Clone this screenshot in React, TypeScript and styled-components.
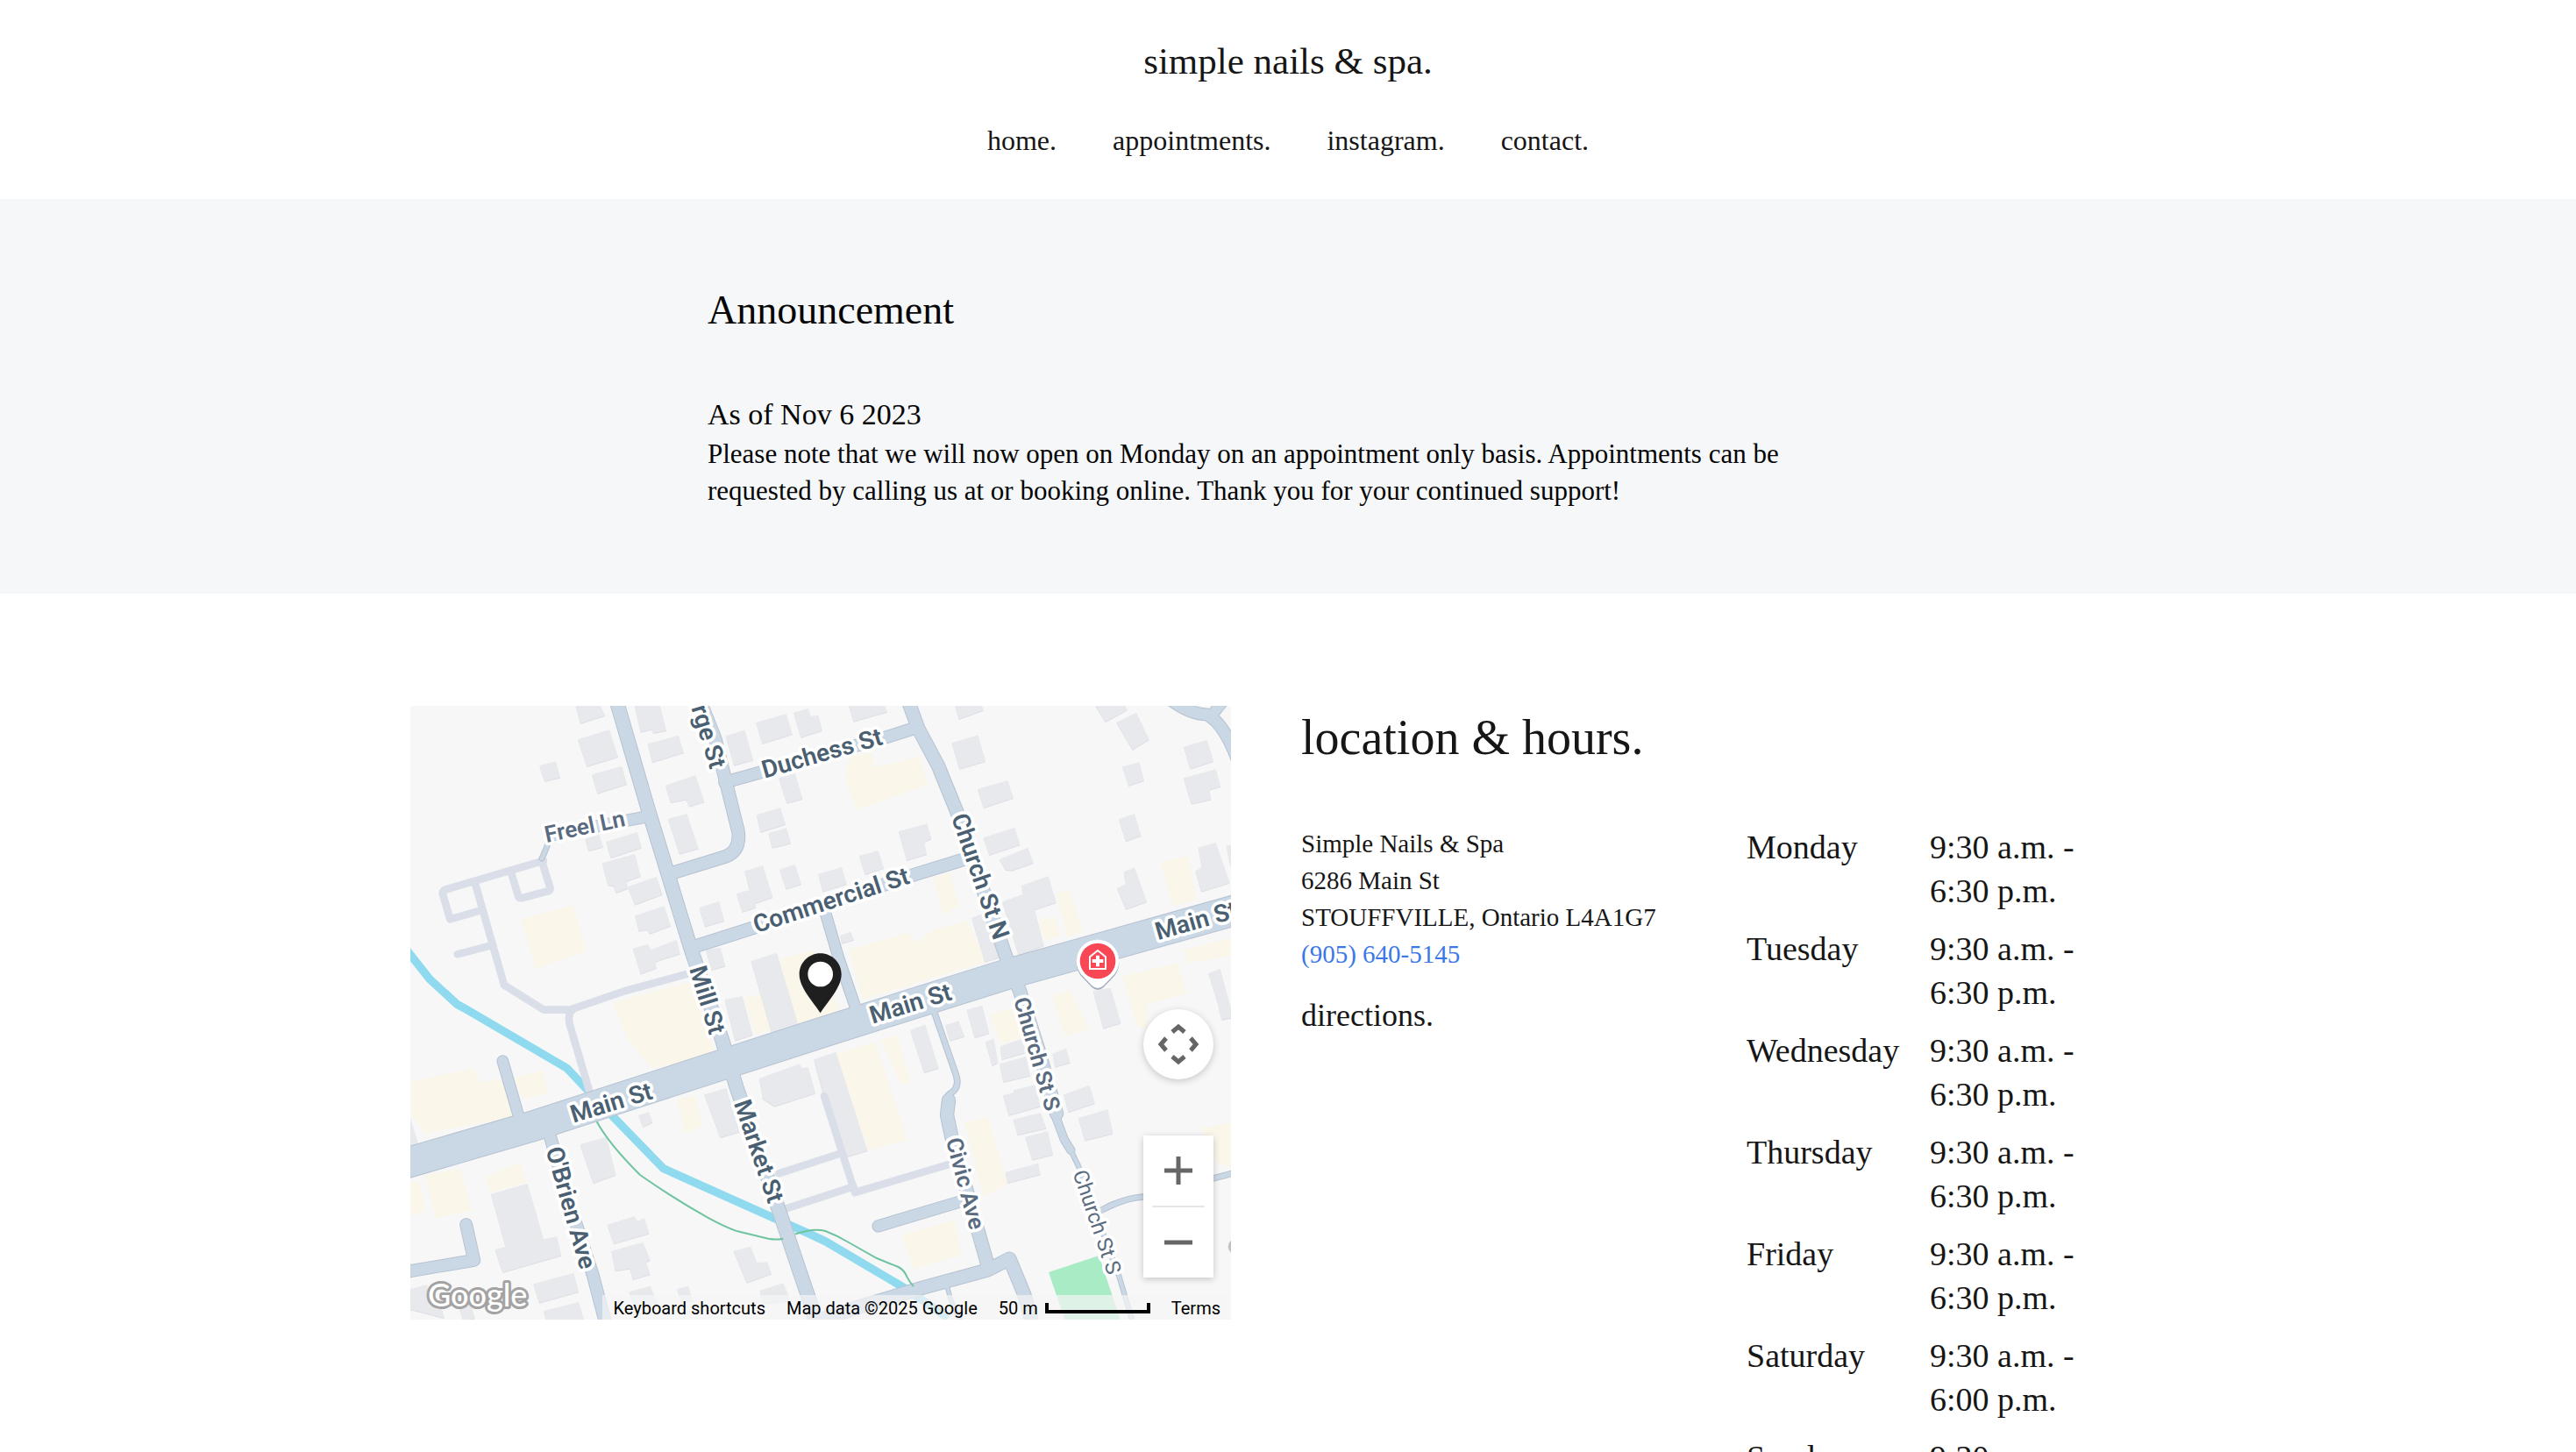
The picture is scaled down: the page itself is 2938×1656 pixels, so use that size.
import React from "react";
import styled, { createGlobalStyle } from "styled-components";

const GlobalStyle = createGlobalStyle`
  *, *::before, *::after { box-sizing: border-box; }
  body {
    margin: 0;
    background: #ffffff;
    color: #161616;
    font-family: "Liberation Serif", serif;
  }
`;

const Header = styled.header`
  display: flex;
  flex-direction: column;
  align-items: center;
  gap: 45px;
  padding: 45px 0 47px;
`;

const Brand = styled.a`
  font-size: 43px;
  line-height: 50px;
  color: inherit;
  text-decoration: none;
`;

const Nav = styled.nav`
  display: flex;
  gap: 64px;
`;

const NavLink = styled.a`
  font-size: 32px;
  line-height: 40px;
  color: inherit;
  text-decoration: none;
`;

const Banner = styled.section`
  background: #f5f7f9;
  color: #050505;
  padding: 99px 32px 96px;
`;

const BannerBody = styled.div`
  max-width: 1324px;
  margin: 0 auto;
`;

const BannerTitle = styled.h2`
  margin: 0 0 67px;
  font-size: 46px;
  line-height: 56px;
  font-weight: 400;
`;

const BannerDate = styled.h3`
  margin: 0;
  font-size: 34px;
  line-height: 48px;
  font-weight: 400;
`;

const BannerText = styled.p`
  margin: 0;
  font-size: 31px;
  line-height: 42px;
`;

const Visit = styled.main`
  display: grid;
  grid-template-columns: 936fr 986fr;
  column-gap: 80px;
  align-items: start;
  max-width: 2002px;
  margin: 0 auto;
  padding: 128px 0;
`;

const Details = styled.div`
  display: grid;
  grid-template-columns: 508fr 478fr;
  align-items: start;
`;

const VisitTitle = styled.h1`
  grid-column: 1 / -1;
  margin: 0 0 64px;
  font-size: 56px;
  line-height: 72px;
  font-weight: 400;
`;

const Address = styled.address`
  font-style: normal;
  font-size: 29px;
  line-height: 42px;
`;

const PhoneLink = styled.a`
  color: #3b78e7;
  text-decoration: none;
`;

const Directions = styled.a`
  display: inline-block;
  margin-top: 28px;
  font-size: 36px;
  line-height: 42px;
  color: inherit;
  text-decoration: none;
`;

const Hours = styled.table`
  border-collapse: collapse;
  font-size: 38px;
  line-height: 50px;
`;

const Day = styled.th`
  width: 209px;
  padding: 0 0 16px;
  font-weight: 400;
  text-align: left;
  vertical-align: top;
`;

const Time = styled.td`
  padding: 0 0 16px;
  white-space: nowrap;
`;

const MapFrame = styled.div`
  position: relative;
  aspect-ratio: 936 / 700;
  overflow: hidden;
  background: #f7f7f7;
`;

const MapDrawing = styled.svg`
  display: block;
  width: 100%;
  height: 100%;
  font-family: Roboto, sans-serif;
`;

const MapControls = styled.div`
  position: absolute;
  right: 20px;
  bottom: 48px;
  display: flex;
  flex-direction: column;
  gap: 64px;
`;

const PanButton = styled.button`
  display: grid;
  place-items: center;
  width: 80px;
  height: 80px;
  padding: 0;
  border: 0;
  border-radius: 50%;
  background: #ffffff;
  box-shadow: 0 2px 8px rgba(0, 0, 0, 0.2);
`;

const ZoomBox = styled.div`
  display: flex;
  flex-direction: column;
  width: 80px;
  background: #ffffff;
  box-shadow: 0 2px 8px rgba(0, 0, 0, 0.2);
`;

const ZoomButton = styled.button`
  display: grid;
  place-items: center;
  height: 80px;
  padding: 0;
  border: 0;
  background: transparent;
`;

const ZoomRule = styled.hr`
  width: 60px;
  height: 2px;
  margin: 0 auto;
  border: 0;
  background: #e6e6e6;
`;

const Attribution = styled.div`
  position: absolute;
  right: 0;
  bottom: 0;
  display: flex;
  align-items: flex-end;
  gap: 24px;
  height: 28px;
  padding: 0 12px 0 12px;
  background: rgba(245, 245, 245, 0.7);
  color: #000000;
  font-family: Roboto, sans-serif;
  font-size: 20px;
  line-height: 26px;
`;

const TextButton = styled.button`
  padding: 0;
  border: 0;
  background: none;
  color: inherit;
  font: inherit;
`;

const ScaleButton = styled(TextButton)`
  display: flex;
  align-items: center;
  gap: 8px;
`;

const ScaleBar = styled.span`
  width: 120px;
  height: 12px;
  border: 4px solid #000000;
  border-top: 0;
`;

const TermsLink = styled.a`
  color: inherit;
  text-decoration: none;
`;

type Block = { dx: number; dy: number; homes: string[]; shops: string[] };

const BLOCKS: Block[] = [
  {
    dx: -24,
    dy: -15,
    homes: [
      "590,15 675,15 690,48 606,75",
      "597,130 705,97 735,190 628,222",
      "466,220 522,205 537,260 484,273",
      "645,250 748,221 765,283 664,314",
      "792,15 878,15 900,100 856,108 848,95 812,104",
      "836,145 942,116 959,175 852,208",
      "1103,118 1168,98 1197,200 1132,218",
      "1207,72 1310,43 1331,112 1228,144",
      "1336,38 1385,24 1394,50 1420,48 1433,100 1360,122",
      "897,287 1000,252 1030,343 978,359 968,335 915,346",
      "906,402 970,384 1010,503 945,521",
      "1285,262 1340,245 1366,333 1312,348",
      "1209,388 1290,364 1308,420 1222,447",
      "1250,450 1311,433 1326,485 1262,500",
      "622,470 670,455 684,497 634,511",
      "694,480 800,447 815,500 710,535",
      "681,553 792,522 812,598 764,615 768,640 728,655 720,632 700,628",
      "768,634 866,600 887,660 793,695",
      "793,733 893,700 915,768 842,795 835,780 806,785",
      "786,845 836,830 848,850 935,815 947,863 862,890 866,912 812,932",
      "1013,705 1080,684 1098,750 1032,770",
      "1140,657 1185,645 1168,580 1230,562 1264,670 1205,690 1205,705 1160,720",
      "1288,575 1340,557 1362,625 1310,641",
      "1035,850 1085,842 1102,905 1055,918",
      "1190,888 1278,860 1355,1120 1265,1150",
      "1100,1020 1160,1008 1195,1140 1135,1160",
    ],
    shops: [
      "405,745 580,697 628,855 452,914",
      "715,1030 985,960 1070,1210 850,1255 770,1160",
      "1285,885 1400,850 1500,1070 1345,1110",
      "1165,1015 1220,1000 1260,1125 1205,1140",
    ],
  },
  {
    dx: 1356,
    dy: -15,
    homes: [
      "145,15 268,15 276,35 160,68",
      "508,15 600,15 605,30 522,60",
      "497,142 586,115 612,205 523,230",
      "585,300 688,270 707,330 606,364",
      "315,445 412,418 427,470 402,480 411,523 343,543",
      "180,528 245,510 264,570 200,592",
      "40,590 120,567 137,625 55,650",
      "605,466 712,432 730,490 625,525",
      "660,540 757,500 776,553 702,578 680,575",
      "735,630 827,597 854,688 780,712 812,835 725,868 670,685 740,660",
      "115,800 150,788 162,815 120,827",
      "565,740 605,725 660,875 610,890",
      "988,15 1090,15 1098,28 1022,70",
      "1060,72 1128,38 1172,130 1115,165",
      "1290,155 1370,132 1392,205 1313,230",
      "1290,262 1400,232 1416,290 1378,302 1384,335 1316,350",
      "1080,223 1138,208 1155,270 1102,288",
      "1068,403 1122,384 1144,460 1092,478",
      "1062,638 1092,625 1085,583 1122,568 1164,685 1092,711",
      "1340,500 1400,483 1448,620 1350,650 1330,580 1352,568",
      "1436,495 1460,488 1460,570 1450,560",
      "1375,930 1415,915 1460,1080 1425,1088",
      "980,990 1040,980 1075,1100 1015,1118",
    ],
    shops: [
      "148,190 220,175 235,225 385,190 415,285 170,370 133,260",
      "435,600 490,585 520,700 465,730",
      "145,850 350,790 370,825 440,780 550,750 615,890 190,1020",
      "795,745 850,738 870,800 812,818",
      "855,655 900,645 945,790 890,805",
      "1210,550 1305,530 1335,680 1255,698",
      "1080,940 1270,895 1300,1000 1165,1035 1165,1120 1130,1110",
      "1290,850 1452,810 1452,870 1300,895",
      "840,1005 900,990 970,1120 885,1145",
    ],
  },
  {
    dx: -24,
    dy: 1035,
    homes: [
      "605,465 695,440 727,570 650,598",
      "300,635 425,600 480,790 525,780 541,845 340,903 314,825 350,815",
      "698,740 790,712 800,728 825,718 841,770 720,805",
      "712,830 820,800 845,862 830,868 845,910 785,928 775,890 725,898",
      "1030,295 1105,273 1150,422 1085,442",
      "805,365 840,355 853,390 820,405",
      "1218,240 1355,190 1365,205 1385,200 1410,290 1270,335 1230,310",
      "1405,175 1480,150 1520,290 1440,310",
      "1130,830 1188,815 1210,870 1245,868 1260,908 1175,938",
      "445,943 583,905 600,970 465,1007",
      "772,970 845,950 870,1010 790,1020",
      "937,960 975,950 990,1000 950,1005",
      "480,1035 600,1005 620,1070 490,1070",
      "24,960 80,945 100,1010 130,1020 140,1060 24,1030",
      "190,1020 230,1010 245,1060 205,1070",
      "20,365 52,465 20,475",
      "1220,965 1300,940 1325,1000 1230,1010",
    ],
    shops: [
      "24,250 240,205 265,255 340,240 378,370 75,430 30,370",
      "375,240 475,210 495,290 410,310",
      "24,595 55,590 75,690 24,710",
      "75,570 195,550 235,690 110,720",
      "280,580 400,525 420,595 300,630",
      "935,310 1000,300 1022,405 965,425",
    ],
  },
  {
    dx: 1356,
    dy: 1035,
    homes: [
      "355,75 405,55 452,205 402,220",
      "475,58 520,43 540,95 490,111",
      "548,5 600,-10 625,85 575,100",
      "612,115 640,103 655,185 635,196",
      "26,175 100,150 208,487 130,510",
      "662,130 735,105 752,150 668,175",
      "660,190 750,165 765,230 673,252",
      "672,298 710,288 708,280 780,262 800,335 692,366",
      "707,380 800,357 820,410 722,433",
      "748,440 825,420 843,500 772,518",
      "680,560 792,530 800,568 688,598",
      "842,155 888,137 902,185 850,200",
      "880,295 968,263 986,325 895,355",
      "930,375 1030,346 1048,428 952,452",
      "1410,0 1460,-10 1460,30 1420,38",
    ],
    shops: [
      "100,155 235,115 345,450 210,485",
      "253,105 310,92 355,250 325,265",
      "625,20 700,0 740,100 665,120",
      "540,390 620,372 688,600 605,645",
      "328,775 505,725 530,845 365,890",
      "1350,410 1460,390 1460,545 1400,530",
    ],
  },
];

const LANES = [
  "M456,530 L126,627 Q108,632 111,645 L136,730 L241,700",
  "M221,605 L321,955 L456,1040 L546,1040 L736,975 L960,914",
  "M161,850 L276,820",
  "M346,575 L371,655 Q376,660 384,657 L474,633 Q480,630 478,622 L451,535",
  "M556,1040 Q538,1050 545,1090 L616,1330",
  "M1261,1600 L1476,1530",
  "M1286,1720 L1516,1645",
  "M1416,1335 L1521,1665 L1856,1565",
];

const ROADS: { d: string; w: number }[] = [
  { d: "M-20,1566 L406,1442 L1416,1115 L2036,920 L2830,697", w: 102 },
  { d: "M706,-15 L814,355 L961,835 L1066,1140 L1116,1305 L1261,1725 L1366,2035 L1391,2120", w: 46 },
  { d: "M990,-20 L1044,115 L1076,245 L1122,430 Q1130,495 1080,515 L895,572", w: 42 },
  { d: "M1076,262 L1636,105 L1730,75", w: 40 },
  { d: "M1704,-15 L1738,78 L1806,205 L1871,365 L1990,720 L2046,880 L2085,975 L2150,1180 L2211,1395", w: 44 },
  { d: "M975,823 L1166,762 L1726,577 L1886,528", w: 42 },
  { d: "M1415,690 L1466,865 L1526,1040", w: 36 },
  { d: "M1842,1350 L1836,1400 L1853,1480 L1976,1915", w: 44 },
  { d: "M1390,2105 L1556,2050 L1756,1990 L1976,1930 L2050,1892 L2101,2015 L2130,2120", w: 44 },
  { d: "M1601,1780 L1896,1692", w: 38 },
  { d: "M800,381 L560,427 L492,440", w: 38 },
  { d: "M476,1465 L540,1690 L624,1945 L670,2120", w: 40 },
  { d: "M316,1215 L374,1415", w: 36 },
  { d: "M191,1775 L218,1897 L-20,1937", w: 40 },
  { d: "M2590,-30 Q2660,28 2726,30 Q2785,60 2832,190", w: 40 },
  { d: "M2740,35 L2788,-25", w: 36 },
  { d: "M1790,1040 L1868,1265 Q1880,1305 1850,1325 Q1830,1335 1836,1370", w: 18 },
  { d: "M2211,1395 L2240,1480 L2286,1575 L2426,1955 L2475,2120", w: 14 },
  { d: "M2206,1400 L2238,1485 L2260,1520", w: 26 },
  { d: "M2366,1725 Q2440,1685 2506,1680 L2830,1595", w: 18 },
  { d: "M1836,1985 L1852,2040 L1885,2110", w: 12 },
  { d: "M480,445 Q466,490 450,522", w: 16 },
];

type Label = { text: string; x: number; y: number; turn: number; size: number; tone?: "soft" | "thin"; end?: boolean };

const LABELS: Label[] = [
  { text: "Duchess St", x: 1212, y: 248, turn: -16, size: 84 },
  { text: "Freel Ln", x: 466, y: 468, turn: -12, size: 78, tone: "soft" },
  { text: "Commercial St", x: 1184, y: 778, turn: -18, size: 84 },
  { text: "George St", x: 1026, y: 220, turn: 73, size: 84, end: true },
  { text: "Church St N", x: 1850, y: 380, turn: 71, size: 84 },
  { text: "Mill St", x: 954, y: 900, turn: 73, size: 84 },
  { text: "Market St", x: 1106, y: 1360, turn: 71, size: 84 },
  { text: "O'Brien Ave", x: 463, y: 1518, turn: 74, size: 84 },
  { text: "Main St", x: 558, y: 1427, turn: -17, size: 84 },
  { text: "Main St", x: 1582, y: 1088, turn: -17, size: 84 },
  { text: "Main St", x: 2558, y: 802, turn: -16, size: 84 },
  { text: "Church St S", x: 2064, y: 1006, turn: 74, size: 76, tone: "soft" },
  { text: "Civic Ave", x: 1832, y: 1486, turn: 75, size: 78, tone: "soft" },
  { text: "Church St S", x: 2266, y: 1598, turn: 71, size: 72, tone: "thin" },
];

const StreetMap = () => (
  <MapDrawing viewBox="0 0 2808 2100" preserveAspectRatio="xMidYMid slice" role="img" aria-label="Map of Main St">
    {BLOCKS.map((block) => (
      <g key={`${block.dx},${block.dy}`} transform={`translate(${block.dx} ${block.dy})`}>
        {block.shops.map((points) => (
          <polygon key={points} points={points} fill="#faf6ea" />
        ))}
        {block.homes.map((points) => (
          <polygon key={points} points={points} transform="translate(0 3)" fill="#dcdee4" />
        ))}
        {block.homes.map((points) => (
          <polygon key={points} points={points} fill="#e8e9ed" />
        ))}
      </g>
    ))}
    <path d="M2184,1938 L2356,1881 L2401,2015 L2431,2105 L2241,2105 Z" fill="#a8ebc5" />
    <path
      d="M-12,836 L66,935 L161,1022 L186,1035 L536,1240 L616,1325 L700,1412 L866,1583 L1256,1758 L1356,1802 L1420,1832 L1696,1995 L1840,2095"
      fill="none"
      stroke="#8fdaef"
      strokeWidth="28"
    />
    <g fill="none" stroke="#d9dee8" strokeWidth="26" strokeLinejoin="round" strokeLinecap="round">
      {LANES.map((d) => (
        <path key={d} d={d} />
      ))}
    </g>
    <g fill="none" stroke="#b7c2d1" strokeLinejoin="round" strokeLinecap="round">
      {ROADS.map((road) => (
        <path key={road.d} d={road.d} strokeWidth={road.w + 5} />
      ))}
    </g>
    <g fill="none" stroke="#cad8e6" strokeLinejoin="round" strokeLinecap="round">
      {ROADS.map((road) => (
        <path key={road.d} d={road.d} strokeWidth={road.w - 1} />
      ))}
    </g>
    <g fill="none" stroke="#6fc4a0" strokeWidth="6">
      <path d="M638,1423 Q680,1500 786,1605 Q900,1685 1016,1750 Q1080,1785 1120,1798 L1225,1823 Q1255,1828 1276,1823" />
      <path d="M1316,1808 Q1380,1786 1420,1797 Q1460,1812 1500,1836 L1596,1890 L1670,1920 Q1690,1930 1700,1955 Q1710,1975 1722,1986" />
    </g>
    <circle cx="2824" cy="1850" r="26" fill="#bfc3c8" />
    {LABELS.map((label) => (
      <text
        key={`${label.text}${label.x}`}
        transform={`translate(${label.x} ${label.y}) rotate(${label.turn})`}
        textAnchor={label.end ? "end" : "start"}
        fontSize={label.size}
        fontWeight={label.tone === "thin" ? 400 : 600}
        fill={label.tone ? "#5a6b80" : "#4a5f72"}
        stroke="#ffffff"
        strokeWidth="22"
        strokeLinejoin="round"
        paintOrder="stroke"
      >
        {label.text}
      </text>
    ))}
    <path
      fill="#1f1f1f"
      fillRule="evenodd"
      d="M1403,847 C1363,847 1331,879 1331,919 C1331,965 1380,1015 1403,1051 C1426,1015 1475,965 1475,919 C1475,879 1443,847 1403,847 Z"
    />
    <circle cx="1403" cy="918" r="43" fill="#ffffff" />
    <g transform="translate(2352 873)">
      <path d="M0,-73 A73,73 0 0 1 58,44 L20,84 Q0,102 -20,84 L-58,44 A73,73 0 0 1 0,-73 Z" transform="translate(0 6)" fill="#a3afbc" />
      <path d="M0,-73 A73,73 0 0 1 58,44 L20,84 Q0,102 -20,84 L-58,44 A73,73 0 0 1 0,-73 Z" fill="#ffffff" />
      <circle r="61" fill="#f84855" />
      <path d="M-27,27 V-14 L0,-36 L27,-14 V27 Z" fill="none" stroke="#ffffff" strokeWidth="6" />
      <path d="M-6,-19 H6 V-6 H19 V6 H6 V19 H-6 V6 H-19 V-6 H-6 Z" fill="#ffffff" />
    </g>
    <text
      x="60"
      y="2054"
      fontFamily="Lato, sans-serif"
      fontSize="108"
      fontWeight="500"
      fill="#ffffff"
      stroke="#a3a3a3"
      strokeWidth="18"
      strokeLinejoin="round"
      paintOrder="stroke"
    >
      Google
    </text>
  </MapDrawing>
);

const PanIcon = () => (
  <svg width="48" height="48" viewBox="0 0 48 48" fill="none" stroke="#666666" strokeWidth="5" aria-hidden="true">
    <path d="M17,10 L24,4 L31,10" />
    <path d="M17,38 L24,44 L31,38" />
    <path d="M10,17 L4,24 L10,31" />
    <path d="M38,17 L44,24 L38,31" />
  </svg>
);

const PlusIcon = () => (
  <svg width="34" height="34" viewBox="0 0 34 34" stroke="#666666" strokeWidth="5" aria-hidden="true">
    <path d="M1,17 H33 M17,1 V33" />
  </svg>
);

const MinusIcon = () => (
  <svg width="34" height="34" viewBox="0 0 34 34" stroke="#666666" strokeWidth="5" aria-hidden="true">
    <path d="M1,17 H33" />
  </svg>
);

const LINKS = ["home.", "appointments.", "instagram.", "contact."];

const HOURS = [
  { day: "Monday", opens: "9:30 a.m.", closes: "6:30 p.m." },
  { day: "Tuesday", opens: "9:30 a.m.", closes: "6:30 p.m." },
  { day: "Wednesday", opens: "9:30 a.m.", closes: "6:30 p.m." },
  { day: "Thursday", opens: "9:30 a.m.", closes: "6:30 p.m." },
  { day: "Friday", opens: "9:30 a.m.", closes: "6:30 p.m." },
  { day: "Saturday", opens: "9:30 a.m.", closes: "6:00 p.m." },
  { day: "Sunday", opens: "9:30 a.m.", closes: "6:00 p.m." },
];

export default function App() {
  return (
    <>
      <GlobalStyle />
      <Header>
        <Brand href="#home">simple nails &amp; spa.</Brand>
        <Nav>
          {LINKS.map((link) => (
            <NavLink key={link} href={`#${link.replace(".", "")}`}>
              {link}
            </NavLink>
          ))}
        </Nav>
      </Header>
      <Banner>
        <BannerBody>
          <BannerTitle>Announcement</BannerTitle>
          <BannerDate>As of Nov 6 2023</BannerDate>
          <BannerText>
            Please note that we will now open on Monday on an appointment only basis. Appointments can be requested by
            calling us at or booking online. Thank you for your continued support!
          </BannerText>
        </BannerBody>
      </Banner>
      <Visit>
        <MapFrame>
          <StreetMap />
          <MapControls>
            <PanButton type="button" aria-label="Map camera controls">
              <PanIcon />
            </PanButton>
            <ZoomBox>
              <ZoomButton type="button" aria-label="Zoom in">
                <PlusIcon />
              </ZoomButton>
              <ZoomRule />
              <ZoomButton type="button" aria-label="Zoom out">
                <MinusIcon />
              </ZoomButton>
            </ZoomBox>
          </MapControls>
          <Attribution>
            <TextButton type="button">Keyboard shortcuts</TextButton>
            <span>Map data ©2025 Google</span>
            <ScaleButton type="button">
              50 m
              <ScaleBar />
            </ScaleButton>
            <TermsLink href="#terms">Terms</TermsLink>
          </Attribution>
        </MapFrame>
        <Details>
          <VisitTitle>location &amp; hours.</VisitTitle>
          <div>
            <Address>
              Simple Nails &amp; Spa
              <br />
              6286 Main St
              <br />
              STOUFFVILLE, Ontario L4A1G7
              <br />
              <PhoneLink href="tel:+19056405145">(905) 640-5145</PhoneLink>
            </Address>
            <Directions href="#directions">directions.</Directions>
          </div>
          <Hours>
            <tbody>
              {HOURS.map(({ day, opens, closes }) => (
                <tr key={day}>
                  <Day scope="row">{day}</Day>
                  <Time>
                    {opens} -<br />
                    {closes}
                  </Time>
                </tr>
              ))}
            </tbody>
          </Hours>
        </Details>
      </Visit>
    </>
  );
}
